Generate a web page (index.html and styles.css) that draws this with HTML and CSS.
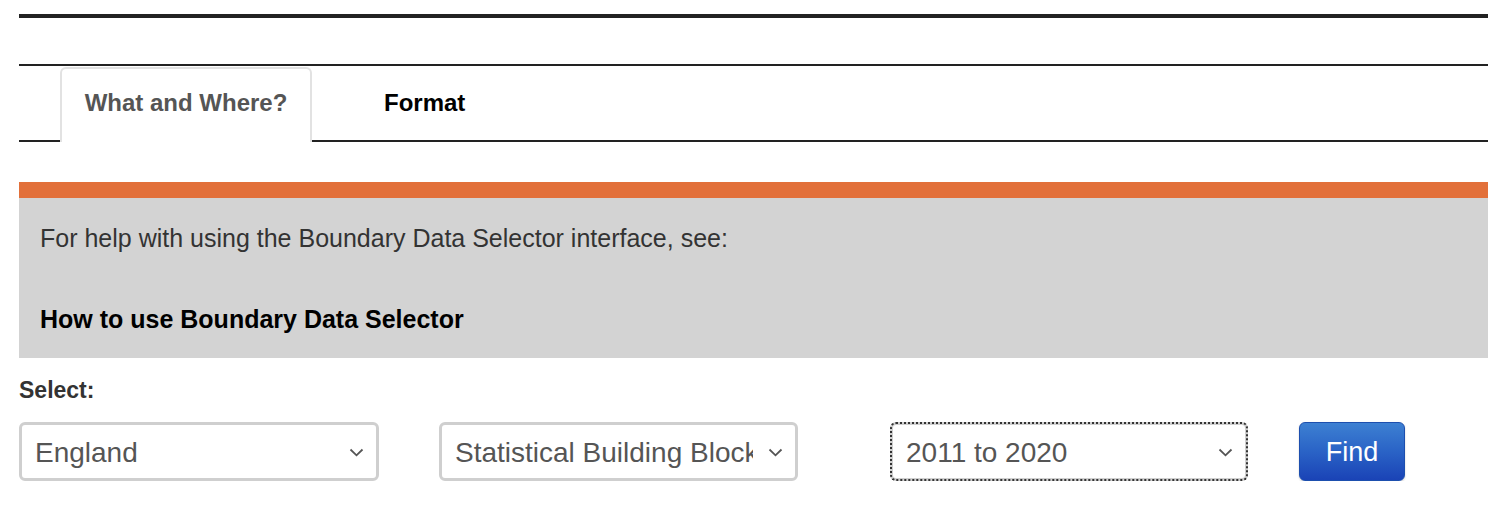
FILE: index.html
```html
<!DOCTYPE html>
<html lang="en">
<head>
<meta charset="utf-8">
<title>Boundary Data Selector</title>
<link rel="stylesheet" href="styles.css">
</head>
<body>
<div class="page">
  <div class="top-rule"></div>

  <nav class="tabs">
    <a class="tab tab-active" href="#">What and Where?</a>
    <a class="tab tab-plain" href="#">Format</a>
  </nav>

  <div class="help">
    <div class="help-bar"></div>
    <div class="help-body">
      <p class="help-text">For help with using the Boundary Data Selector interface, see:</p>
      <p class="help-link"><a href="#">How to use Boundary Data Selector</a></p>
    </div>
  </div>

  <div class="select-label">Select:</div>
  <form class="select-row">
    <div class="select-wrap">
      <select class="sel"><option>England</option></select>
      <svg class="chev" width="15" height="9" viewBox="0 0 15 9"><path d="M1.5 1.5 L7.5 7.3 L13.5 1.5" fill="none" stroke="#555" stroke-width="1.8"/></svg>
    </div>
    <div class="select-wrap gap-a">
      <select class="sel"><option>Statistical Building Blocks</option></select>
      <svg class="chev" width="15" height="9" viewBox="0 0 15 9"><path d="M1.5 1.5 L7.5 7.3 L13.5 1.5" fill="none" stroke="#555" stroke-width="1.8"/></svg>
    </div>
    <div class="select-wrap gap-b">
      <select class="sel sel-focus"><option>2011 to 2020</option></select>
      <svg class="chev" width="15" height="9" viewBox="0 0 15 9"><path d="M1.5 1.5 L7.5 7.3 L13.5 1.5" fill="none" stroke="#555" stroke-width="1.8"/></svg>
    </div>
    <button class="find" type="button">Find</button>
  </form>
</div>
</body>
</html>
```

FILE: styles.css
```css
* { box-sizing: border-box; }

html, body {
  margin: 0;
  padding: 0;
  background: #fff;
}

body {
  font-family: "Liberation Sans", Arial, Helvetica, sans-serif;
  color: #333;
}

.page {
  padding-left: 19px;
}

.top-rule {
  margin-top: 14px;
  height: 4px;
  background: #222;
}

.tabs {
  margin-top: 46px;
  display: flex;
  border-top: 2px solid #222;
  border-bottom: 2px solid #222;
  height: 78px;
  padding-left: 41px;
}

.tab {
  display: block;
  font-size: 24px;
  line-height: 24px;
  font-weight: bold;
  text-decoration: none;
  padding: 22px 26px 27px;
}

.tab-active {
  margin-top: 1px;
  margin-bottom: -2px;
  width: 252px;
  height: 75px;
  color: #555;
  background: #fff;
  border: 2px solid #e2e2e2;
  border-bottom: none;
  border-radius: 6px 6px 0 0;
  text-align: center;
  padding-left: 0;
  padding-right: 0;
}

.tab-plain {
  color: #000;
  margin-left: 46px;
  padding-top: 25px;
}

.help {
  margin-top: 40px;
}

.help-bar {
  height: 16px;
  background: #e2703a;
}

.help-body {
  background: #d3d3d3;
  padding: 25px 21px 24px;
}

.help-body p {
  margin: 0;
  font-size: 25px;
  line-height: 30px;
}

.help-text {
  color: #333;
}

.help-link {
  margin-top: 51px !important;
  font-weight: bold;
}

.help-link a {
  color: #000;
  text-decoration: none;
}

.select-label {
  margin-top: 18px;
  font-size: 23px;
  line-height: 28px;
  font-weight: bold;
  color: #333;
}

.select-row {
  margin: 18px 0 0;
  display: flex;
  align-items: flex-start;
}

.select-wrap {
  position: relative;
  width: 360px;
  height: 59px;
}

.gap-a { margin-left: 60px; width: 359px; }
.gap-b { margin-left: 92px; width: 358px; }

.sel {
  -webkit-appearance: none;
  appearance: none;
  width: 100%;
  height: 59px;
  margin: 0;
  border: 3px solid #cfcfcf;
  border-radius: 6px;
  background: #fff;
  font-family: "Liberation Sans", Arial, Helvetica, sans-serif;
  font-size: 28px;
  color: #555;
  padding: 2px 42px 0 13px;
}

.sel-focus {
  outline: 2px dotted #333;
  outline-offset: -2px;
}

.chev {
  position: absolute;
  right: 15px;
  top: 26px;
  pointer-events: none;
}

.find {
  margin-left: 51px;
  width: 106px;
  height: 59px;
  border: 1px solid #1d4fae;
  border-radius: 6px;
  background: linear-gradient(to bottom, #3d80d2 0%, #2a63c6 50%, #1a43b6 100%);
  color: #fff;
  font-family: "Liberation Sans", Arial, Helvetica, sans-serif;
  font-size: 27px;
  padding: 2px 0 0;
  box-shadow: 0 1px 2px rgba(0, 0, 0, 0.2);
}
```
